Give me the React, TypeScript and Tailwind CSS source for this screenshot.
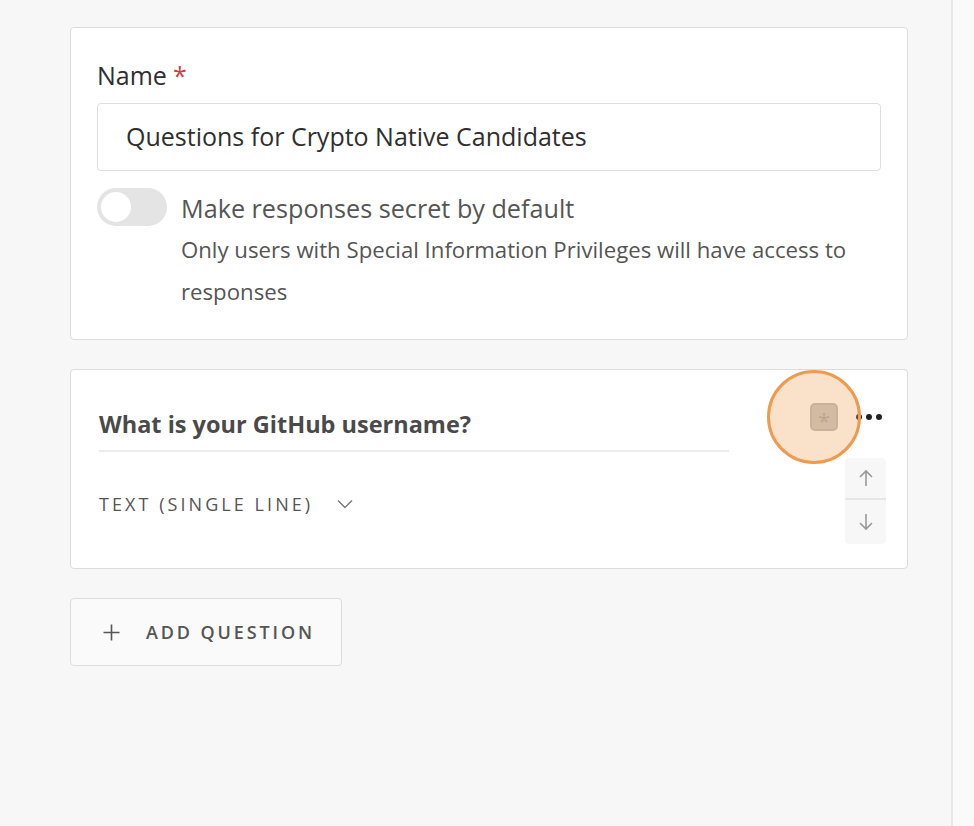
import React from "react";

export default function App() {
  return (
    <div className="flex h-[826px] w-[974px] bg-[#f7f7f7] text-[#333]" style={{ fontFamily: '"Open Sans", "Noto Sans", sans-serif' }}>
      <div className="w-[951px] shrink-0 pl-[70px] pr-[43px] pt-[27px]">
        {/* Card 1 */}
        <div className="rounded-[4px] border border-[#dcdcdc] bg-white px-[26px] pb-[26px] pt-[32px]">
          <div className="flex items-center text-[25px] leading-[30px] text-[#2f2f2f]">
            Name <span className="ml-[6px] text-[#d33c3c]">*</span>
          </div>
          <div className="mt-[13px] flex h-[68px] items-center rounded-[4px] border border-[#dedede] px-[28px] text-[25px] text-[#2f2f2f]">
            Questions for Crypto Native Candidates
          </div>
          <div className="mt-[17px] flex">
            <div className="flex h-[38px] w-[70px] shrink-0 items-center rounded-full bg-[#e4e4e4] px-[4px]">
              <div className="h-[30px] w-[30px] rounded-full bg-white" />
            </div>
            <div className="ml-[14px] pt-[1px]">
              <div className="text-[25.2px] leading-[38px] text-[#555]">Make responses secret by default</div>
              <div className="mt-[2px] text-[22.2px] leading-[42px] text-[#555]">
                Only users with Special Information Privileges will have access to responses
              </div>
            </div>
          </div>
        </div>

        {/* Card 2 */}
        <div className="relative mt-[29px] flex items-start rounded-[4px] border border-[#dcdcdc] bg-white pl-[28px] pr-[21px]">
          <div className="w-[630px] pb-[51px] pt-[39px]">
            <div className="border-b-2 border-[#ececec] pb-[11px] text-[23.5px] font-bold leading-[30px] text-[#4a4a4a]">
              What is your GitHub username?
            </div>
            <div className="mt-[39px] flex h-[26px] items-center text-[18px] uppercase tracking-[0.17em] text-[#555]">
              Text (Single line)
              <svg className="ml-[24px]" width="16" height="10" viewBox="0 0 16 10" fill="none" stroke="#777" strokeWidth="1.4">
                <path d="M1 1.5 L8 8.5 L15 1.5" />
              </svg>
            </div>
          </div>
          <div className="ml-auto flex flex-col items-end pt-[33px]">
            <div className="mr-[4px] flex h-[28px] items-center gap-[4px]">
              <div className="mr-[14px] flex h-[28px] w-[28px] items-center justify-center rounded-[5px] border-2 border-[#b9b9b9] bg-[#c8c8c8] pt-[6px] text-[22px] leading-none text-[#a8a8a8]">
                *
              </div>
              <span className="h-[6px] w-[6px] rounded-full bg-[#222]" />
              <span className="h-[6px] w-[6px] rounded-full bg-[#222]" />
              <span className="h-[6px] w-[6px] rounded-full bg-[#222]" />
            </div>
            <div className="mt-[27px] flex w-[41px] flex-col rounded-[4px] bg-[#f7f7f7]">
              <div className="flex h-[42px] items-center justify-center border-b-2 border-[#e6e6e6]">
                <svg width="16" height="18" viewBox="0 0 16 18" fill="none" stroke="#999" strokeWidth="1.6">
                  <path d="M8 17 V2 M2 8 L8 2 L14 8" />
                </svg>
              </div>
              <div className="flex h-[44px] items-center justify-center">
                <svg width="16" height="18" viewBox="0 0 16 18" fill="none" stroke="#999" strokeWidth="1.6">
                  <path d="M8 1 V16 M2 10 L8 16 L14 10" />
                </svg>
              </div>
            </div>
          </div>
          {/* highlight overlay */}
          <div className="absolute left-[696px] top-[0px] h-[94px] w-[94px] rounded-full border-[3px] border-[#ee9a4f] bg-[#ee9a4f]/30" />
        </div>

        {/* Add question */}
        <button className="mt-[29px] flex h-[68px] w-[272px] items-center rounded-[4px] border border-[#dcdcdc] bg-[#fafafa] pl-[32px] text-[18px] font-semibold uppercase tracking-[0.16em] text-[#555]">
          <svg width="17" height="17" viewBox="0 0 17 17" fill="none" stroke="#555" strokeWidth="1.6">
            <path d="M8.5 0.5 V16.5 M0.5 8.5 H16.5" />
          </svg>
          <span className="ml-[26px]">Add Question</span>
        </button>
      </div>
      <div className="w-[2px] shrink-0 bg-[#e8e8e8]" />
      <div className="flex-1 bg-[#fafafa]" />
    </div>
  );
}
